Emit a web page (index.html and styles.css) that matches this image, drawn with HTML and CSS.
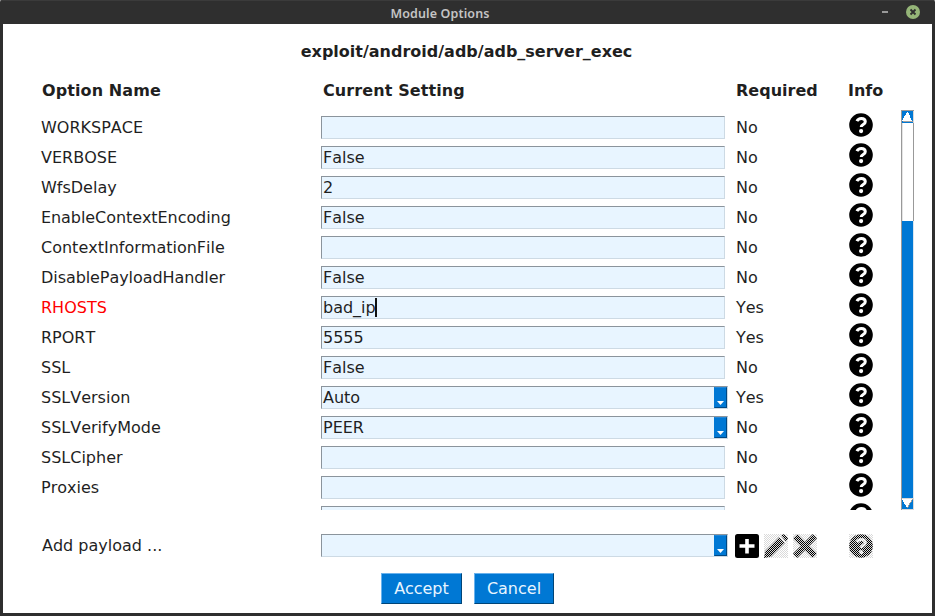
FILE: index.html
```html
<!DOCTYPE html>
<html lang="en">
<head>
<meta charset="utf-8">
<title>Module Options</title>
<link rel="stylesheet" href="styles.css">
</head>
<body>
<svg class="defs" width="0" height="0">
  <defs>
    <pattern id="stipple" width="2" height="2" patternUnits="userSpaceOnUse">
      <path d="M0 0h1v1h-1zM1 1h1v1h-1z" fill="#d9d9d9" shape-rendering="crispEdges"/>
    </pattern>
    <symbol id="help" viewBox="0 0 24 24">
      <circle cx="12" cy="12" r="11.8"/>
      <path d="M7.900 8.200C8.900 6.200 10.300 5.400 12.300 5.400c2.300 0 4 1.300 4 3.300 0 2.900-4.100 2.700-4.100 5.400" fill="none" stroke="#fff" stroke-width="3"/>
      <circle cx="12.100" cy="18.100" r="2.100" fill="#fff"/>
    </symbol>
  </defs>
</svg>
<div class="window">
  <header class="titlebar">
    <span class="caption">Module Options</span>
    <span class="minimize"></span>
    <svg class="close" width="14" height="14"><circle cx="7" cy="7" r="7" fill="#95b578"/><path d="M4.5 4.5l5 5M9.5 4.5l-5 5" stroke="#2f2f2f" stroke-width="1.9"/></svg>
  </header>
  <main class="content">
    <h1>exploit/android/adb/adb_server_exec</h1>
    <div class="row heads"><span>Option Name</span><span>Current Setting</span><span>Required</span><span>Info</span></div>
    <div class="scroller">
      <div class="options">
        <div class="row"><label>WORKSPACE</label><div class="field"></div><span>No</span><svg class="info"><use href="#help"/></svg></div>
        <div class="row"><label>VERBOSE</label><div class="field">False</div><span>No</span><svg class="info"><use href="#help"/></svg></div>
        <div class="row"><label>WfsDelay</label><div class="field">2</div><span>No</span><svg class="info"><use href="#help"/></svg></div>
        <div class="row"><label class="snug">EnableContextEncoding</label><div class="field">False</div><span>No</span><svg class="info"><use href="#help"/></svg></div>
        <div class="row"><label>ContextInformationFile</label><div class="field"></div><span>No</span><svg class="info"><use href="#help"/></svg></div>
        <div class="row"><label class="snug">DisablePayloadHandler</label><div class="field">False</div><span>No</span><svg class="info"><use href="#help"/></svg></div>
        <div class="row"><label class="invalid">RHOSTS</label><div class="field">bad_ip<i class="caret"></i></div><span>Yes</span><svg class="info"><use href="#help"/></svg></div>
        <div class="row"><label>RPORT</label><div class="field">5555</div><span>Yes</span><svg class="info"><use href="#help"/></svg></div>
        <div class="row"><label>SSL</label><div class="field">False</div><span>No</span><svg class="info"><use href="#help"/></svg></div>
        <div class="row"><label>SSLVersion</label><div class="field combo">Auto<b class="drop"></b></div><span>Yes</span><svg class="info"><use href="#help"/></svg></div>
        <div class="row"><label>SSLVerifyMode</label><div class="field combo">PEER<b class="drop"></b></div><span>No</span><svg class="info"><use href="#help"/></svg></div>
        <div class="row"><label>SSLCipher</label><div class="field"></div><span>No</span><svg class="info"><use href="#help"/></svg></div>
        <div class="row"><label>Proxies</label><div class="field"></div><span>No</span><svg class="info"><use href="#help"/></svg></div>
        <div class="row"><label></label><div class="field"></div><span></span><svg class="info"><use href="#help"/></svg></div>
      </div>
      <div class="scrollbar">
        <svg class="up" width="13" height="13" shape-rendering="crispEdges"><path fill="#0078d4" d="M0 0h13v13H0z"/><path fill="#999" d="M0 0h13v1H0zM0 0h1v13H0z"/><path fill="#fff" d="M6 2h1l4 9H1z"/><path fill="#a0a0a0" d="M2 11h10v1H2z"/><path fill="#d9d9d9" d="M12 1h1v12h-1z"/></svg>
        <div class="trough"></div>
        <div class="thumb"></div>
        <svg class="down" width="13" height="12" shape-rendering="crispEdges"><path fill="#0078d4" d="M0 0h13v12H0z"/><path fill="#999" d="M0 0h1v12H0z"/><path fill="#fff" d="M1 1h11l-5 9H6z"/><path fill="#999" d="M12 1l-5 9H6l5-9z"/><path fill="#d9d9d9" d="M1 0h11v1H1zM12 0h1v12h-1zM1 11h11v1H1z"/></svg>
      </div>
    </div>
    <div class="row payload">
      <label>Add payload ...</label>
      <div class="field combo"><b class="drop"></b></div>
      <div class="tools">
        <svg width="24" height="24"><rect width="24" height="24" rx="2.500"/><path d="M10.200 5h3.600v5.200H19.500v3.600h-5.700V19.500h-3.600v-5.700H4.500v-3.600h5.700z" fill="#fff"/></svg>
        <svg width="24" height="24"><path d="M.5 16L14.500 2.500l7 7L8 23 0 24z" fill="#ccc"/><path d="M1.500 17L15 3.500l5.500 5.500L7 22.500 0 24zM17 1.500L18.200.5q1.200-.8 2.300.2l2.800 2.800q1 1.100.2 2.300L22 7.500z"/><rect width="24" height="24" fill="url(#stipple)"/></svg>
        <svg width="24" height="24"><path d="M2.200 2.200l19.600 19.600M21.800 2.200L2.200 21.800" stroke="#ccc" stroke-width="7.500"/><path d="M2.200 2.200l19.600 19.600M21.800 2.200L2.200 21.800" stroke="#000" stroke-width="5.800"/><rect width="24" height="24" fill="url(#stipple)"/></svg>
      </div>
      <svg class="info"><use href="#help"/><rect width="24" height="24" fill="url(#stipple)"/></svg>
    </div>
    <div class="actions"><button>Accept</button><button>Cancel</button></div>
  </main>
</div>
</body>
</html>
```
FILE: styles.css
```css
* { box-sizing: border-box; }
body { margin: 0; background: #fff; color: #1f1f1f; font: 16px/20px "DejaVu Sans", sans-serif; font-kerning: none; }
.defs { position: absolute; }
.window { width: 935px; height: 616px; padding: 0 3px 3px; background: #2f2f2f; border-radius: 2px 2px 0 0; overflow: hidden; }
.titlebar { display: flex; align-items: center; height: 24px; margin: 0 -3px; border-top: 1px solid #3b3b3b; color: #c4c4c4; font: 600 12.5px/23px "Noto Sans", sans-serif; }
.caption { width: 880px; padding-top: 1px; text-align: center; letter-spacing: .12px; }
.minimize { width: 6px; height: 2px; margin: -2px 0 0 2px; background: #999; }
.close { margin: -1px 0 0 18px; }
.content { height: 589px; background: #fff; overflow: hidden; }
h1 { height: 28px; margin: 18px 2px 0 0; font: bold 16px/20px "DejaVu Sans", sans-serif; text-align: center; }
.row { display: grid; grid-template-columns: 280px 415px 112px 54px; height: 30px; padding-left: 38px; }
.heads { height: 40px; padding: 11px 0 0 39px; font-weight: bold; }
.heads span:nth-child(n+2) { padding-left: 1px; }
.heads span:nth-child(n+3) { padding-left: 0; margin-left: -1px; }
.heads span:nth-child(-n+2) { letter-spacing: .1px; }
.scroller { display: flex; height: 400px; overflow: hidden; }
.options { width: 898px; padding-top: 3px; }
.options .row { align-items: start; }
label, .row > span { padding-top: 5px; }
.row.heads > span { padding-top: 0; }
.snug { letter-spacing: -.07px; }
.invalid { color: #f00; }
.field { display: flex; width: 404px; height: 23px; margin-top: 3px; padding-left: 1px; border: 1px solid; border-color: #8b949c #cddae4 #cddae4 #8b949c; background: #e8f5ff; line-height: 22px; }
.combo { width: 407px; }
.drop { width: 13px; height: 21px; margin-left: auto; padding: 13px 0 0 2px; border: 1px solid; border-color: #2388d8 #004883 #004883 #0078d4; background: #0078d4; }
.drop::after { content: ""; display: block; width: 7px; height: 4px; background: #fff; clip-path: polygon(0 0, 100% 0, 50% 100%); }
.caret { width: 2px; height: 19px; margin: 1px 0 0 -1px; background: #111; }
.info { width: 24px; height: 24px; margin-left: 1px; }
.scrollbar { display: flex; flex-direction: column; width: 13px; height: 400px; }
.scrollbar svg { display: block; flex: none; }
.trough { height: 98px; border: solid #999; border-width: 0 1px; box-shadow: inset 1px 0 #e4e4e4; }
.thumb { height: 277px; border-left: 1px solid #999; border-right: 1px solid #d9e6f0; background: #0078d4; }
.payload { height: 24px; margin-top: 24px; }
.payload label { padding: 2px 0 0 1px; }
.payload .field { margin-top: 0; }
.tools { display: flex; gap: 5px; margin-left: -1px; }
.tools svg { flex: none; }
.actions { display: flex; justify-content: center; gap: 12px; margin-top: 15px; }
button { width: 81px; height: 31px; padding: 0; border: 1px solid; border-color: #69b2ed #004578 #004578 #69b2ed; background: #0078d4; color: #e8f5ff; font: 16px/20px "DejaVu Sans", sans-serif; }
button + button { width: 80px; }
```
